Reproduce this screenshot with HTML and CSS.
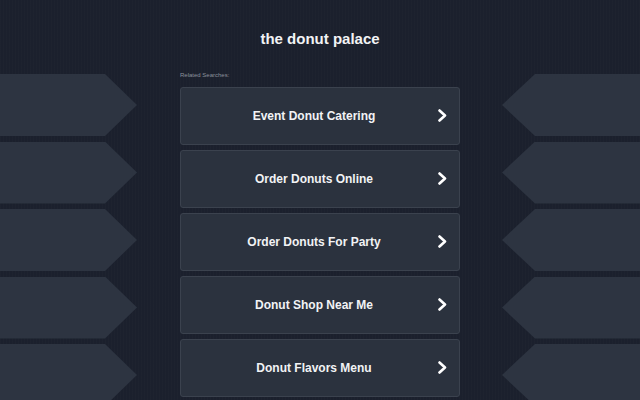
FILE: index.html
```html
<!DOCTYPE html>
<html lang="en">
<head>
<meta charset="utf-8">
<title>the donut palace</title>
<link rel="stylesheet" href="styles.css">
</head>
<body>
<div class="page">
  <header class="header">
    <h1 class="title">the donut palace</h1>
  </header>
  <div class="deco deco-left">
    <div class="shape"></div>
    <div class="shape"></div>
    <div class="shape"></div>
    <div class="shape"></div>
    <div class="shape"></div>
  </div>
  <main class="main">
    <div class="related">Related Searches:</div>
    <ul class="links">
      <li class="link"><span class="label">Event Donut Catering</span><svg class="arrow" viewBox="0 0 9 13" width="9" height="13"><path d="M1.5 1.5 L7 6.5 L1.5 11.5" fill="none" stroke="#fff" stroke-width="2.6" stroke-linecap="round" stroke-linejoin="round"/></svg></li>
      <li class="link"><span class="label">Order Donuts Online</span><svg class="arrow" viewBox="0 0 9 13" width="9" height="13"><path d="M1.5 1.5 L7 6.5 L1.5 11.5" fill="none" stroke="#fff" stroke-width="2.6" stroke-linecap="round" stroke-linejoin="round"/></svg></li>
      <li class="link"><span class="label">Order Donuts For Party</span><svg class="arrow" viewBox="0 0 9 13" width="9" height="13"><path d="M1.5 1.5 L7 6.5 L1.5 11.5" fill="none" stroke="#fff" stroke-width="2.6" stroke-linecap="round" stroke-linejoin="round"/></svg></li>
      <li class="link"><span class="label">Donut Shop Near Me</span><svg class="arrow" viewBox="0 0 9 13" width="9" height="13"><path d="M1.5 1.5 L7 6.5 L1.5 11.5" fill="none" stroke="#fff" stroke-width="2.6" stroke-linecap="round" stroke-linejoin="round"/></svg></li>
      <li class="link"><span class="label">Donut Flavors Menu</span><svg class="arrow" viewBox="0 0 9 13" width="9" height="13"><path d="M1.5 1.5 L7 6.5 L1.5 11.5" fill="none" stroke="#fff" stroke-width="2.6" stroke-linecap="round" stroke-linejoin="round"/></svg></li>
    </ul>
  </main>
  <div class="deco deco-right">
    <div class="shape"></div>
    <div class="shape"></div>
    <div class="shape"></div>
    <div class="shape"></div>
    <div class="shape"></div>
  </div>
</div>
</body>
</html>
```
FILE: styles.css
```css
html, body {
  margin: 0;
  padding: 0;
}
body {
  width: 640px;
  height: 400px;
  overflow: hidden;
  background-color: #1b202d;
  background-image: repeating-linear-gradient(90deg, rgba(255,255,255,0.012) 0, rgba(255,255,255,0.012) 1px, transparent 1px, transparent 3px);
  font-family: "Liberation Sans", Arial, sans-serif;
  color: #fff;
}
.page {
  display: grid;
  grid-template-columns: 137px 1fr 138px;
  grid-template-rows: 70px auto;
}
.header {
  grid-column: 1 / 4;
  padding-top: 29px;
  text-align: center;
}
.title {
  margin: 0;
  font-size: 15px;
  line-height: 20px;
  font-weight: bold;
  color: #f2f3f5;
}
.deco {
  display: flex;
  flex-direction: column;
  gap: 5.5px;
  padding-top: 4px;
}
.shape {
  height: 62px;
  flex: none;
  background: #2d3441;
}
.deco-left .shape {
  clip-path: polygon(0 0, 105px 0, 137px 50%, 105px 100%, 0 100%);
}
.deco-right .shape {
  clip-path: polygon(33px 0, 100% 0, 100% 100%, 33px 100%, 0 50%);
}
.main {
  justify-self: center;
  width: 280px;
  margin-left: 1px;
}
.related {
  font-size: 6px;
  line-height: 10px;
  color: #8b909b;
  margin-bottom: 7px;
}
.links {
  list-style: none;
  margin: 0;
  padding: 0;
  display: flex;
  flex-direction: column;
  gap: 5px;
}
.link {
  box-sizing: border-box;
  height: 58px;
  border: 1px solid #3b424e;
  border-radius: 3px;
  background: #2b323e;
  display: grid;
  grid-template-columns: 1fr 9px;
  align-items: center;
  padding-right: 12px;
}
.label {
  grid-column: 1 / 3;
  grid-row: 1;
  text-align: center;
  font-size: 12px;
  font-weight: bold;
  color: #f2f3f5;
}
.arrow {
  grid-column: 2;
  grid-row: 1;
  display: block;
  margin-top: -2px;
}
```
